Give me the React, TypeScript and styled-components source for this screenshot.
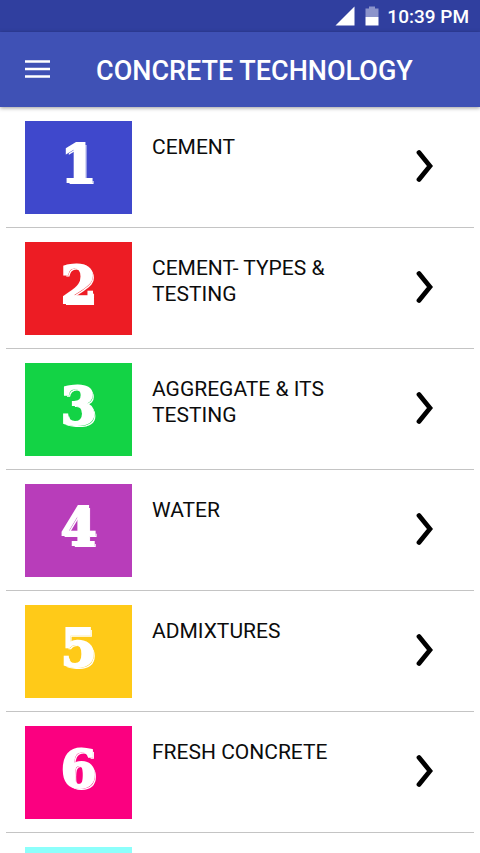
import React from "react";
import styled, { createGlobalStyle } from "styled-components";

const GlobalStyle = createGlobalStyle`
  *, *::before, *::after { box-sizing: border-box; }
  body { margin: 0; background: #fff; font-family: Roboto, "Noto Sans", sans-serif; }
`;

const Screen = styled.div`
  display: flex;
  flex-direction: column;
  height: 100vh;
  overflow: hidden;
  background: #fff;
`;

const StatusBar = styled.div`
  display: flex;
  flex: none;
  align-items: center;
  justify-content: flex-end;
  height: 32px;
  padding: 2px 11px 0 0;
  background: #303f9f;
  color: #fff;
`;

const SignalIcon = styled.svg`
  width: 20px;
  height: 20px;
  margin: 0 10px 2px 0;
`;

const BatteryIcon = styled.svg`
  width: 14px;
  height: 20px;
  margin: 0 8px 2px 0;
`;

const Clock = styled.time`
  font-size: 19px;
  font-weight: 500;
  line-height: 24px;
`;

const AppBar = styled.header`
  position: relative;
  display: flex;
  flex: none;
  align-items: center;
  height: 75px;
  padding: 0 25px;
  gap: 46px;
  background: #3f51b5;
  color: #fff;
  box-shadow: 0 1px 4px rgba(0, 0, 0, 0.4);
`;

const MenuButton = styled.button`
  display: flex;
  padding: 0 0 2px;
  border: 0;
  background: none;
  color: inherit;
  cursor: pointer;
`;

const Title = styled.h1`
  margin: 0;
  padding-top: 2px;
  font-size: 27px;
  font-weight: 500;
  line-height: 32px;
  white-space: nowrap;
`;

const ChapterList = styled.ul`
  flex: 1;
  min-height: 0;
  margin: 0;
  padding: 0 6px;
  overflow-y: auto;
  scrollbar-width: none;
  list-style: none;
`;

const ChapterItem = styled.li`
  border-bottom: 1px solid #c4c4c4;
`;

const ChapterButton = styled.button`
  display: flex;
  align-items: flex-start;
  width: 100%;
  padding: 14px 41px 13px 19px;
  gap: 20px;
  border: 0;
  background: none;
  color: #0c0c0c;
  font: inherit;
  text-align: left;
  cursor: pointer;
`;

const NextChapter = styled.li`
  padding: 14px 19px 13px;
`;

const Tile = styled.span<{ $color: string }>`
  display: flex;
  flex: none;
  align-items: center;
  justify-content: center;
  width: 107px;
  height: 93px;
  padding-bottom: 8px;
  background: ${({ $color }) => $color};
  color: #fff;
  font-family: "DejaVu Serif", serif;
  font-size: 52px;
  font-weight: 700;
  line-height: 60px;
  -webkit-text-stroke: 2px #fff;
  text-shadow: 1px 1px 0 ${({ $color }) => $color}, 2px 2px 0 #fff;
`;

const Label = styled.span`
  flex: 1;
  padding-top: 13px;
  font-size: 21px;
  line-height: 26px;
`;

const Chevron = styled.svg`
  flex: none;
  align-self: center;
  width: 17px;
  height: 34px;
  margin-bottom: 3px;
`;

type Chapter = { label: string; color: string };

const chapters: Chapter[] = [
  { label: "CEMENT", color: "#3f48cc" },
  { label: "CEMENT- TYPES & TESTING", color: "#ed1c24" },
  { label: "AGGREGATE & ITS TESTING", color: "#13d345" },
  { label: "WATER", color: "#b83dba" },
  { label: "ADMIXTURES", color: "#ffca18" },
  { label: "FRESH CONCRETE", color: "#fb0080" },
];

function ChapterRow({ chapter, number }: { chapter: Chapter; number: number }) {
  return (
    <ChapterItem>
      <ChapterButton type="button">
        <Tile $color={chapter.color}>{number}</Tile>
        <Label>{chapter.label}</Label>
        <Chevron viewBox="0 0 17 34" aria-hidden="true">
          <path
            d="M3 3.5 14 17 3 30.5"
            fill="none"
            stroke="#000"
            strokeWidth="4.8"
            strokeLinecap="round"
          />
        </Chevron>
      </ChapterButton>
    </ChapterItem>
  );
}

export default function App() {
  return (
    <Screen>
      <GlobalStyle />
      <StatusBar>
        <SignalIcon viewBox="0 0 20 20" aria-hidden="true">
          <path d="M19.5 0.5V19.5H0.5Z" fill="#fff" />
        </SignalIcon>
        <BatteryIcon viewBox="0 0 14 20" aria-hidden="true">
          <path d="M4 0.5h6v2h3.5V11H0.5V2.5H4Z" fill="#8c94cb" />
          <path d="M0.5 11h13v8.5h-13Z" fill="#fff" />
        </BatteryIcon>
        <Clock>10:39 PM</Clock>
      </StatusBar>
      <AppBar>
        <MenuButton type="button" aria-label="Menu">
          <svg width="25" height="18" viewBox="0 0 25 18" aria-hidden="true">
            <path d="M0 1.5h25M0 9h25M0 16.5h25" stroke="currentColor" strokeWidth="2.6" />
          </svg>
        </MenuButton>
        <Title>CONCRETE TECHNOLOGY</Title>
      </AppBar>
      <ChapterList>
        {chapters.map((chapter, index) => (
          <ChapterRow key={chapter.label} chapter={chapter} number={index + 1} />
        ))}
        <NextChapter aria-hidden="true">
          <Tile $color="#8cfffb" />
        </NextChapter>
      </ChapterList>
    </Screen>
  );
}
